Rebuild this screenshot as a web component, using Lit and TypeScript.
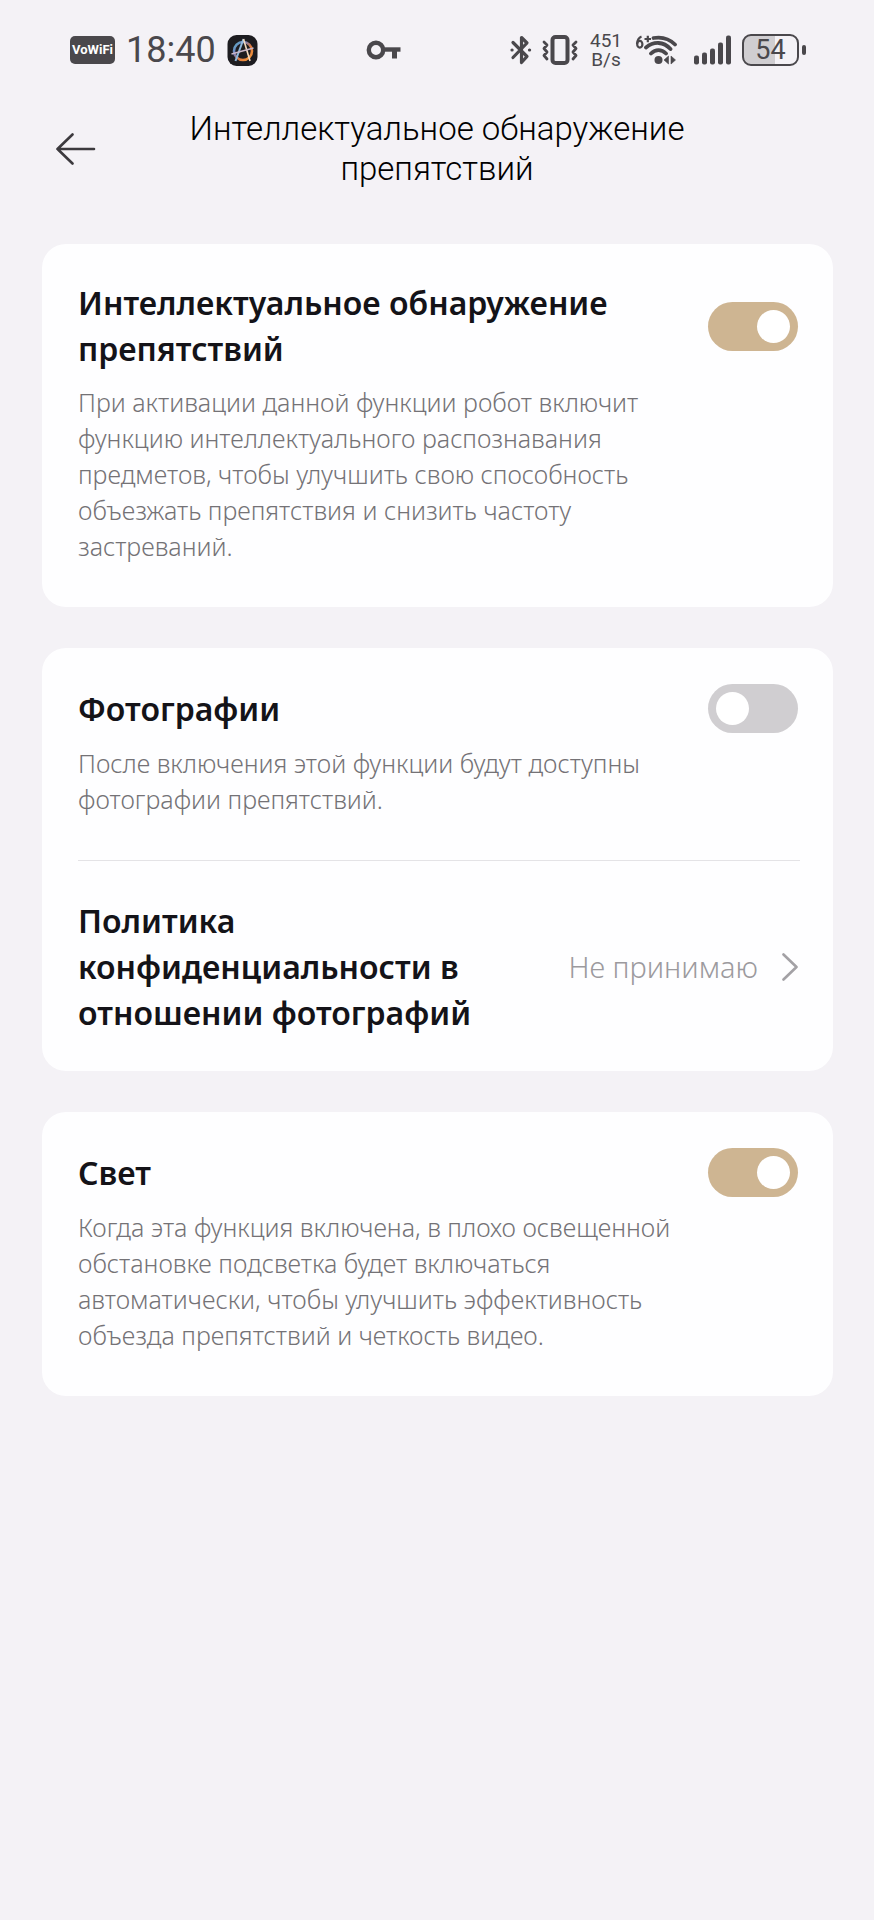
import { LitElement, html, css, svg } from "lit";
import { customElement, property, state } from "lit/decorators.js";

@customElement("status-bar")
class StatusBar extends LitElement {
  static styles = css`
    :host {
      display: flex;
      align-items: center;
      justify-content: space-between;
      height: 100px;
      padding: 0 68px 0 70px;
      box-sizing: border-box;
      color: #4a484c;
      font-family: Roboto, "Liberation Sans", sans-serif;
    }
    .group { display: flex; align-items: center; }
    .left { gap: 11px; }
    .right { gap: 10px; }
    svg { display: block; }
    .badge {
      width: 45px;
      height: 28px;
      border-radius: 5px;
      background: #4a484c;
      color: #fff;
      font-size: 13px;
      line-height: 28px;
      font-weight: 700;
      text-align: center;
    }
    .time { font-size: 36px; line-height: 40px; font-weight: 400; }
    .speed {
      display: flex;
      flex-direction: column;
      min-width: 36px;
      font-size: 19px;
      line-height: 19px;
      text-align: center;
    }
    .battery { display: flex; align-items: center; gap: 3px; }
    .cell {
      width: 57px;
      height: 32px;
      box-sizing: border-box;
      border: 2px solid #4a484c;
      border-radius: 9px;
      background: linear-gradient(90deg, #d0ced1 58%, transparent 58%);
      font-size: 27px;
      line-height: 29px;
      text-align: center;
    }
    .nub { width: 4px; height: 10px; border-radius: 2px; background: #4a484c; }
  `;

  render() {
    return html`
      <div class="group left">
        <span class="badge">VoWiFi</span>
        <span class="time">18:40</span>
        <svg width="31" height="31" viewBox="0 0 30 31" fill="none" aria-hidden="true">
          <defs>
            <linearGradient id="ring" x1="4" y1="6" x2="26" y2="26" gradientUnits="userSpaceOnUse">
              <stop offset="0" stop-color="#58c6c4" />
              <stop offset=".35" stop-color="#6f7fc4" />
              <stop offset=".6" stop-color="#e07a3c" />
              <stop offset="1" stop-color="#f6a03c" />
            </linearGradient>
          </defs>
          <rect width="30" height="31" rx="9" fill="#1d1c20" />
          <circle cx="15.5" cy="16" r="9" stroke="url(#ring)" stroke-width="2.6" />
          <path d="M8 26 16 4" stroke="#8fb7dc" stroke-width="2" />
          <path d="m16 4 6.500 22" stroke="#f3d9bd" stroke-width="1.600" />
          <path d="m4 19 22-6" stroke="#c9b6c8" stroke-width="1.500" />
        </svg>
      </div>

      <svg width="36" height="20" viewBox="0 0 36 20" fill="none" stroke="#4a484c" role="img" aria-label="VPN">
        <circle cx="10" cy="10" r="7.2" stroke-width="4.4" />
        <path d="M17 9.5h17.5" stroke-width="4.4" />
        <path d="M28.5 10v8.5" stroke-width="5" />
      </svg>

      <div class="group right">
        <svg width="22" height="30" viewBox="0 0 22 30" fill="none" stroke="#4a484c" stroke-width="3.2" stroke-linejoin="round" stroke-linecap="round" role="img" aria-label="Bluetooth">
          <path d="M3 7.500 17 21.500l-5.500 6V2.500L17 8 3 22.500" />
          <path d="M2 15h.1M19.500 15h.1" />
        </svg>
        <svg width="36" height="30" viewBox="0 0 36 30" fill="none" stroke="#4a484c" stroke-linejoin="round" stroke-linecap="round" role="img" aria-label="Vibration">
          <rect x="10.500" y="2" width="15" height="26" rx="3" stroke-width="4" />
          <path d="m2 7 3 3-3 3.500 3 3.500-3 3.500 3 3.500M34 7l-3 3 3 3.500-3 3.500 3 3.500-3 3.500" stroke-width="2.800" />
        </svg>
        <span class="speed"><span>451</span><span>B/s</span></span>
        <svg width="50" height="32" viewBox="0 0 50 32" fill="none" stroke="#4a484c" role="img" aria-label="Wi-Fi 6">
          <path d="M7.500 2.500Q3.500 4 3 10" stroke-width="2.200" />
          <ellipse cx="5.800" cy="10.300" rx="2.600" ry="3.400" stroke-width="2.200" />
          <path d="M10.500 5h6.500M13.800 1.800v6.500" stroke-width="2.200" />
          <path d="M19.500 4C28 2.500 36 5.500 41 10.500M12 13.500c8-6.500 17.500-6 24.500 1.500M17 19.500c4.500-4.500 10.500-4.500 15 0" stroke-width="3.800" stroke-linecap="round" />
          <circle cx="24.500" cy="26" r="4" fill="#4a484c" stroke="none" />
          <path d="M34.500 22v8l-4.500-4zM37 22v8l4.500-4z" fill="#4a484c" stroke="#4a484c" stroke-linejoin="round" stroke-width=".6" />
        </svg>
        <svg width="38" height="30" viewBox="0 0 38 30" fill="#4a484c" role="img" aria-label="Signal">
          ${[[0, 9], [8, 12], [16, 16], [24, 22], [32, 29]].map(
            ([x, h]) => svg`<rect x=${x} y=${29.5 - h} width="5" height=${h} rx="2" />`
          )}
        </svg>
        <span class="battery"><span class="cell">54</span><span class="nub"></span></span>
      </div>
    `;
  }
}

@customElement("toggle-setting")
class ToggleSetting extends LitElement {
  @property() heading = "";
  @property() description = "";
  @property({ type: Boolean }) on = false;

  static styles = css`
    :host { display: block; padding: 36px 35px 43px 36px; }
    .head {
      display: flex;
      align-items: center;
      justify-content: space-between;
      gap: 24px;
      margin-bottom: 12px;
    }
    .heading { font-size: 32px; line-height: 46px; font-weight: 600; color: #141318; }
    .description {
      margin: 0;
      max-width: 610px;
      font-size: 25px;
      line-height: 36px;
      font-weight: 300;
      color: #747276;
    }
    .switch {
      appearance: none;
      flex: none;
      display: flex;
      align-items: center;
      width: 90px;
      height: 49px;
      margin: 0;
      padding: 0 8px;
      box-sizing: border-box;
      border-radius: 25px;
      background: #d0ced1;
      cursor: pointer;
    }
    .switch::before {
      content: "";
      width: 33px;
      height: 33px;
      border-radius: 50%;
      background: #fff;
    }
    .switch:checked { justify-content: flex-end; background: #ceb592; }
  `;

  render() {
    return html`
      <div class="head">
        <label class="heading" for="switch">${this.heading}</label>
        <input
          class="switch"
          id="switch"
          type="checkbox"
          role="switch"
          aria-describedby="description"
          .checked=${this.on}
          @change=${(e: Event) => (this.on = (e.target as HTMLInputElement).checked)}
        />
      </div>
      <p class="description" id="description">${this.description}</p>
    `;
  }
}

@customElement("app-root")
class AppRoot extends LitElement {
  @state() consent = "Не принимаю";

  static styles = css`
    :host {
      display: block;
      min-height: 100vh;
      background: #f4f2f6;
      font-family: "Noto Sans", sans-serif;
    }
    .header {
      display: grid;
      grid-template-columns: 64px 1fr 64px;
      align-items: center;
      padding: 9px 48px 55px;
    }
    .back {
      display: flex;
      padding: 8px;
      border: 0;
      background: none;
      cursor: pointer;
    }
    .title {
      margin: 0;
      font-family: Roboto, "Noto Sans", sans-serif;
      font-size: 33px;
      line-height: 40px;
      font-weight: 300;
      text-align: center;
      color: #000;
    }
    .cards {
      display: flex;
      flex-direction: column;
      gap: 41px;
      padding: 0 41px 41px 42px;
    }
    .card { border-radius: 24px; background: #fefeff; }
    .divider { height: 1px; margin: 0 33px 0 36px; border: 0; background: #e4e3e6; }
    .policy {
      display: flex;
      align-items: center;
      gap: 24px;
      width: 100%;
      padding: 37px 35px 35px 36px;
      border: 0;
      background: none;
      font-family: inherit;
      text-align: left;
      cursor: pointer;
    }
    .name { flex: 1; font-size: 32px; line-height: 46px; font-weight: 600; color: #141318; }
    .value { font-size: 29px; line-height: 46px; font-weight: 300; color: #9c9a9e; }
    svg { display: block; }
  `;

  render() {
    return html`
      <status-bar></status-bar>
      <header class="header">
        <button class="back" aria-label="Назад">
          <svg width="40" height="32" viewBox="0 0 40 32" fill="none" stroke="#3c3a3e" stroke-width="2.600" stroke-linecap="round" stroke-linejoin="round">
            <path d="M38 16H1.500M16.500 1.500 1.500 16l15 14.500" />
          </svg>
        </button>
        <h1 class="title">Интеллектуальное обнаружение препятствий</h1>
      </header>
      <main class="cards">
        <section class="card">
          <toggle-setting
            on
            heading="Интеллектуальное обнаружение препятствий"
            description="При активации данной функции робот включит функцию интеллектуального распознавания предметов, чтобы улучшить свою способность объезжать препятствия и снизить частоту застреваний."
          ></toggle-setting>
        </section>
        <section class="card">
          <toggle-setting
            heading="Фотографии"
            description="После включения этой функции будут доступны фотографии препятствий."
          ></toggle-setting>
          <hr class="divider" />
          <button class="policy">
            <span class="name">Политика конфиденциальности в отношении фотографий</span>
            <span class="value">${this.consent}</span>
            <svg width="16" height="28" viewBox="0 0 16 28" fill="none" stroke="#a3a1a5" stroke-width="2.600" stroke-linecap="round" stroke-linejoin="round">
              <path d="m1.500 1.500 13 12.500-13 12.500" />
            </svg>
          </button>
        </section>
        <section class="card">
          <toggle-setting
            on
            heading="Свет"
            description="Когда эта функция включена, в плохо освещенной обстановке подсветка будет включаться автоматически, чтобы улучшить эффективность объезда препятствий и четкость видео."
          ></toggle-setting>
        </section>
      </main>
    `;
  }
}
